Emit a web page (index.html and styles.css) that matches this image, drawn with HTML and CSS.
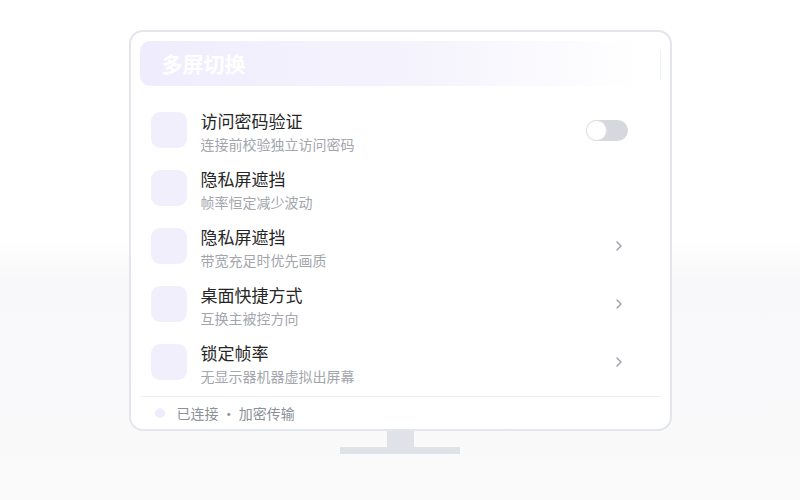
FILE: index.html
```html
<!DOCTYPE html>
<html lang="zh-CN">
<head>
    <meta charset="UTF-8">
    <meta name="viewport" content="width=device-width, initial-scale=1.0">
    <title>多屏切换</title>
    <link rel="stylesheet" href="styles.css">
</head>
<body>
    <div class="stage">
        <div class="monitor">
            <div class="header">多屏切换</div>

            <div class="row">
                <div class="icon"></div>
                <div class="text">
                    <div class="title">访问密码验证</div>
                    <div class="sub">连接前校验独立访问密码</div>
                </div>
                <div class="toggle"><span class="knob"></span></div>
            </div>
            <div class="row">
                <div class="icon"></div>
                <div class="text">
                    <div class="title">隐私屏遮挡</div>
                    <div class="sub">帧率恒定减少波动</div>
                </div>
            </div>
            <div class="row">
                <div class="icon"></div>
                <div class="text">
                    <div class="title">隐私屏遮挡</div>
                    <div class="sub">带宽充足时优先画质</div>
                </div>
                <svg class="chev" width="6" height="10" viewBox="0 0 6 10"><path d="M1 1l4 4-4 4" fill="none" stroke="#9aa0aa" stroke-width="1.4" stroke-linecap="round" stroke-linejoin="round"/></svg>
            </div>
            <div class="row">
                <div class="icon"></div>
                <div class="text">
                    <div class="title">桌面快捷方式</div>
                    <div class="sub">互换主被控方向</div>
                </div>
                <svg class="chev" width="6" height="10" viewBox="0 0 6 10"><path d="M1 1l4 4-4 4" fill="none" stroke="#9aa0aa" stroke-width="1.4" stroke-linecap="round" stroke-linejoin="round"/></svg>
            </div>
            <div class="row">
                <div class="icon"></div>
                <div class="text">
                    <div class="title">锁定帧率</div>
                    <div class="sub">无显示器机器虚拟出屏幕</div>
                </div>
                <svg class="chev" width="6" height="10" viewBox="0 0 6 10"><path d="M1 1l4 4-4 4" fill="none" stroke="#9aa0aa" stroke-width="1.4" stroke-linecap="round" stroke-linejoin="round"/></svg>
            </div>

            <div class="footer">
                <span class="dot"></span>
                <span>已连接 · 加密传输</span>
            </div>
        </div>
        <div class="neck"></div>
        <div class="base"></div>
    </div>
</body>
</html>
```

FILE: styles.css
```css
html, body {
    margin: 0;
    height: 100%;
}

body {
    background: linear-gradient(#ffffff 0%, #ffffff 48%, #f8f8fa 56%, #fafafb 100%);
    font-family: "Noto Sans CJK SC", "Noto Sans", sans-serif;
}

.stage {
    display: flex;
    flex-direction: column;
    align-items: center;
    padding-top: 30px;
}

.monitor {
    box-sizing: border-box;
    width: 543px;
    height: 401px;
    border: 2px solid #e3e6ea;
    border-radius: 14px;
    background: #ffffff;
    padding: 9px 9px 0 9px;
    display: flex;
    flex-direction: column;
}

.header {
    position: relative;
    height: 45px;
    border-radius: 10px;
    background: linear-gradient(90deg, #efedfd 0%, #f5f4fd 55%, #ffffff 96%);
    color: #ffffff;
    font-weight: 700;
    font-size: 21px;
    line-height: 45px;
    padding-left: 22px;
    margin-bottom: 15px;
}

/* thin edge line at the right end of the header */
.header::after {
    content: "";
    position: absolute;
    right: 0;
    top: 9px;
    bottom: 6px;
    width: 1px;
    background: #eceef1;
}

.row {
    height: 58px;
    display: flex;
    align-items: center;
    padding: 0 33px 0 11px;
}

.icon {
    width: 36px;
    height: 36px;
    border-radius: 9px;
    background: #f1effc;
    flex: none;
}

.text {
    flex: 1;
    margin-left: 14px;
    padding-top: 3px;
}

.title {
    font-size: 17px;
    line-height: 22px;
    color: #262626;
}

.sub {
    font-size: 14px;
    line-height: 20px;
    margin-top: 2px;
    color: #a3a6ad;
}

.toggle {
    position: relative;
    width: 42px;
    height: 21px;
    border-radius: 11px;
    background: #d6d8de;
}

.knob {
    position: absolute;
    left: 1px;
    top: 1px;
    width: 19px;
    height: 19px;
    border-radius: 50%;
    background: #ffffff;
    box-shadow: 0 0 0 1px #e1e3e7;
}

.chev {
    margin-right: 6px;
}

.footer {
    margin-top: 5px;
    border-top: 1px solid #eeeff2;
    flex: 1;
    display: flex;
    align-items: center;
    padding-left: 15px;
    font-size: 14px;
    color: #8c9099;
}

.dot {
    width: 10px;
    height: 10px;
    border-radius: 50%;
    background: #efedfc;
    margin-right: 12px;
}

.neck {
    width: 27px;
    height: 16px;
    background: #dfe2e7;
}

.base {
    width: 120px;
    height: 7px;
    background: #dfe2e7;
}
```
